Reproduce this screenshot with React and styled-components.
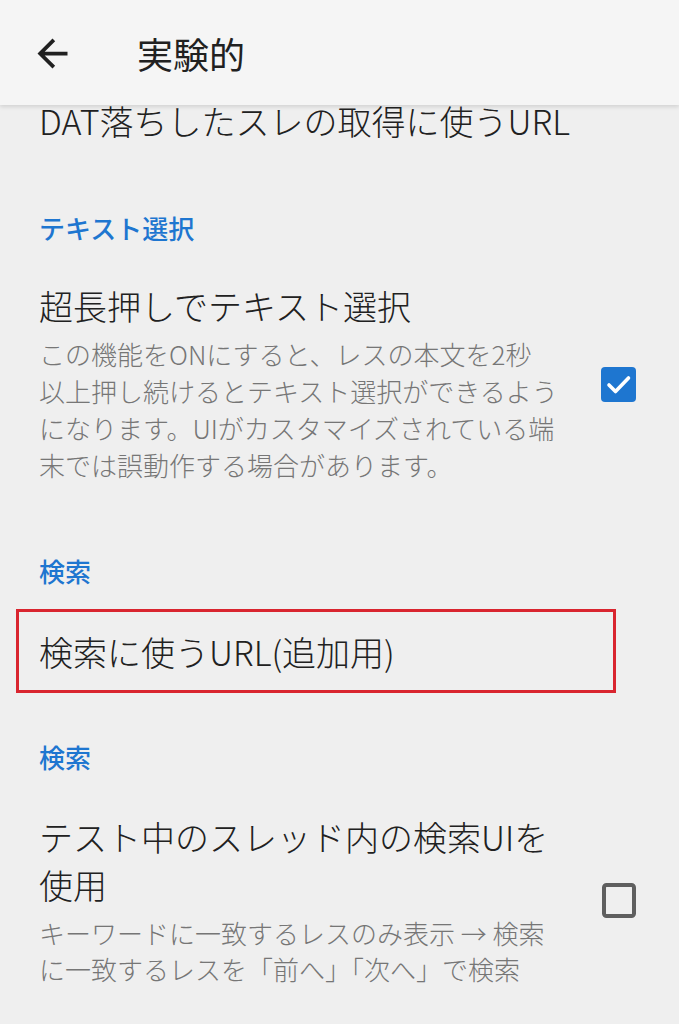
import styled, { createGlobalStyle } from 'styled-components';

const Global = createGlobalStyle`
  html, body {
    margin: 0;
    padding: 0;
    background: #efefef;
  }
  body {
    font-family: "Noto Sans CJK JP", "Noto Sans", sans-serif;
    font-weight: 300;
    color: #212121;
  }
`;

const Page = styled.div`
  width: 679px;
  height: 1024px;
  overflow: hidden;
  background: #efefef;
`;

const Toolbar = styled.header`
  position: relative;
  z-index: 1;
  height: 105px;
  display: flex;
  align-items: center;
  padding-left: 30px;
  background: #f5f5f5;
  box-shadow: 0 2px 4px rgba(0, 0, 0, 0.12);
  box-sizing: border-box;
`;

const BackButton = styled.button`
  display: flex;
  border: 0;
  padding: 0;
  background: none;
  color: #212121;
  margin-top: 2px;
`;

const Title = styled.h1`
  margin: 0 0 0 62px;
  font-size: 36px;
  font-weight: 400;
  color: #212121;
  line-height: 1;
`;

const List = styled.div`
  display: flex;
  flex-direction: column;
`;

const Scrolled = styled.div`
  padding: 0 39px;
  font-size: 34px;
  line-height: 34px;
  margin-top: -1px;
`;

const Category = styled.div`
  padding: 0 39px;
  margin-top: ${p => p.$top}px;
  font-size: 26px;
  line-height: 34px;
  font-weight: 500;
  color: #1e76d0;
`;

const Item = styled.div`
  display: flex;
  align-items: center;
  gap: 36px;
  padding: 0 43px 0 39px;
  margin-top: ${p => p.$top}px;
`;

const Texts = styled.div`
  flex: 1;
  min-width: 0;
`;

const ItemTitle = styled.div`
  font-size: 34px;
  line-height: ${p => p.$lh || 40}px;
  color: #212121;
`;

const Summary = styled.div`
  margin-top: ${p => p.$gap}px;
  font-size: 26px;
  line-height: ${p => p.$lh}px;
  color: #767676;
`;

const Marked = styled.div`
  margin: 21px 0 0 16px;
  width: 600px;
  height: 84px;
  box-sizing: border-box;
  border: 3px solid #d9252f;
  display: flex;
  align-items: center;
  padding-left: 20px;
  font-size: 34px;
  line-height: 34px;
  padding-top: 1px;
`;

const Box = styled.svg`
  flex: none;
  display: block;
`;

function ArrowBack() {
  return (
    <svg width="45" height="45" viewBox="0 0 24 24" fill="currentColor">
      <path d="M20 11H7.83l5.59-5.59L12 4l-8 8 8 8 1.41-1.41L7.83 13H20v-2z" />
    </svg>
  );
}

function CheckBox({ checked }) {
  if (checked) {
    return (
      <Box width="35" height="35" viewBox="0 0 35 35">
        <rect x="0" y="0" width="35" height="35" rx="4" fill="#1e76d0" />
        <polyline
          points="8,18 14.5,24.5 27.5,11"
          fill="none"
          stroke="#fff"
          strokeWidth="3.6"
          strokeLinecap="round"
          strokeLinejoin="round"
        />
      </Box>
    );
  }
  return (
    <Box width="35" height="35" viewBox="0 0 35 35">
      <rect x="3" y="2" width="30" height="31" rx="2.5" fill="none" stroke="#5f5f5f" strokeWidth="4" />
    </Box>
  );
}

export default function App() {
  return (
    <Page>
      <Global />
      <Toolbar>
        <BackButton aria-label="戻る">
          <ArrowBack />
        </BackButton>
        <Title>実験的</Title>
      </Toolbar>
      <List>
        <Scrolled>DAT落ちしたスレの取得に使うURL</Scrolled>

        <Category $top={73}>テキスト選択</Category>
        <Item $top={41}>
          <Texts>
            <ItemTitle>超長押しでテキスト選択</ItemTitle>
            <Summary $gap={9} $lh={37}>
              この機能をONにすると、レスの本文を2秒
              <br />
              以上押し続けるとテキスト選択ができるよう
              <br />
              になります。UIがカスタマイズされている端
              <br />
              末では誤動作する場合があります。
            </Summary>
          </Texts>
          <CheckBox checked />
        </Item>

        <Category $top={71}>検索</Category>
        <Marked>検索に使うURL(追加用)</Marked>

        <Category $top={47}>検索</Category>
        <Item $top={39}>
          <Texts>
            <ItemTitle $lh={48}>テスト中のスレッド内の検索UIを使用</ItemTitle>
            <Summary $gap={6} $lh={36}>
              キーワードに一致するレスのみ表示 → 検索に一致するレスを「前へ」「次へ」で検索
            </Summary>
          </Texts>
          <CheckBox />
        </Item>
      </List>
    </Page>
  );
}
